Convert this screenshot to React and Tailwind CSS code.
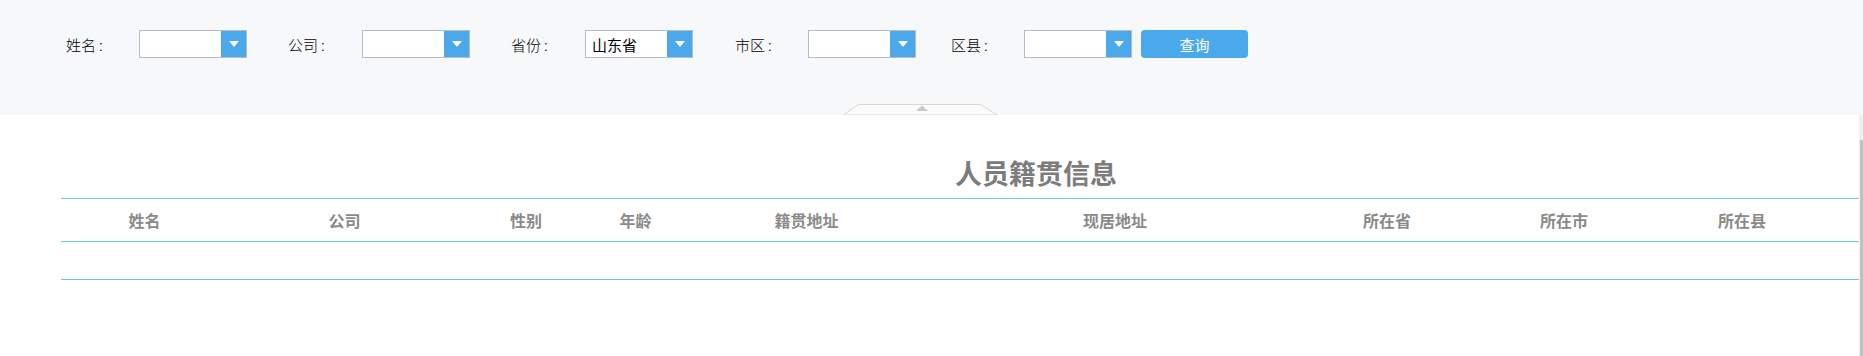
import React from "react";

const FONT = { fontFamily: '"Noto Sans CJK SC", "Noto Sans", sans-serif' };

function Select({ value }) {
  return (
    <div className="flex h-[28px] w-[108px] border border-[#b7b9cc] bg-white">
      <div className="flex w-[81px] items-center pl-[6px] text-[15px] leading-none text-black">
        {value}
      </div>
      <div className="flex w-[25px] items-center justify-center bg-[#49a9ea]">
        <svg width="10" height="6" viewBox="0 0 10 6">
          <polygon points="0,0 10,0 5,6" fill="#ffffff" />
        </svg>
      </div>
    </div>
  );
}

function Field({ label, labelW, after, value }) {
  return (
    <div className="flex items-center">
      <div className={`${labelW} text-[15px] font-light leading-none text-black`}>
        {label}
        <span className="ml-[3px]">:</span>
      </div>
      <Select value={value} />
      <div className={after} />
    </div>
  );
}

const cols = [
  "姓名",
  "公司",
  "性别",
  "年龄",
  "籍贯地址",
  "现居地址",
  "所在省",
  "所在市",
  "所在县",
];

export default function App() {
  return (
    <div className="relative flex h-[356px] w-[1863px] flex-col overflow-hidden bg-white" style={FONT}>
      {/* Query bar */}
      <div className="relative h-[115px] shrink-0 bg-[#f7f8fa]">
        <div className="flex items-center pl-[66px] pt-[30px]">
          <Field label="姓名" labelW="w-[73px]" after="w-[41px]" />
          <Field label="公司" labelW="w-[74px]" after="w-[41px]" />
          <Field label="省份" labelW="w-[74px]" after="w-[42px]" value="山东省" />
          <Field label="市区" labelW="w-[73px]" after="w-[35px]" />
          <Field label="区县" labelW="w-[73px]" after="w-[9px]" />
          <button className="flex h-[28px] w-[107px] items-center justify-center rounded-[4px] bg-[#49a9ea] text-[15px] leading-none text-white">
            查询
          </button>
        </div>
        {/* collapse handle */}
        <svg
          className="absolute left-[843px] top-[104px]"
          width="155"
          height="11"
          viewBox="0 0 155 11"
        >
          <polygon points="0.5,11 15,0.5 137,0.5 154.5,11" fill="#fbfbfc" stroke="#d8d8d8" strokeWidth="1" />
          <polygon points="73,7 79,1.5 85,7" fill="#c9c9c9" />
        </svg>
      </div>

      {/* Content */}
      <div className="flex flex-1">
        <div className="w-[1859px]">
          <div className="pl-[955px] pt-[45px] text-[27px] font-bold leading-[26px] text-[#7c7c7c]">
            人员籍贯信息
          </div>
          <div className="ml-[61px] mt-[12px] w-[1798px]">
            <div className="grid h-[44px] grid-cols-[167px_233px_130px_89px_253px_364px_180px_174px_1fr] items-center border-y border-[#6ccaca]">
              {cols.map((c, i) => (
                <div
                  key={c}
                  className={`text-center text-[16px] font-bold leading-none text-[#8a8a8a] ${i === 8 ? "pr-[26px]" : ""}`}
                >
                  {c}
                </div>
              ))}
            </div>
            <div className="h-[38px] border-b border-[#6ccaca]" />
          </div>
        </div>
        {/* scrollbar */}
        <div className="flex w-[4px] flex-col bg-[#f0f0f0]">
          <div className="h-[25px]" />
          <div className="ml-[1px] flex-1 bg-[#c1c1c1]" />
        </div>
      </div>
    </div>
  );
}
